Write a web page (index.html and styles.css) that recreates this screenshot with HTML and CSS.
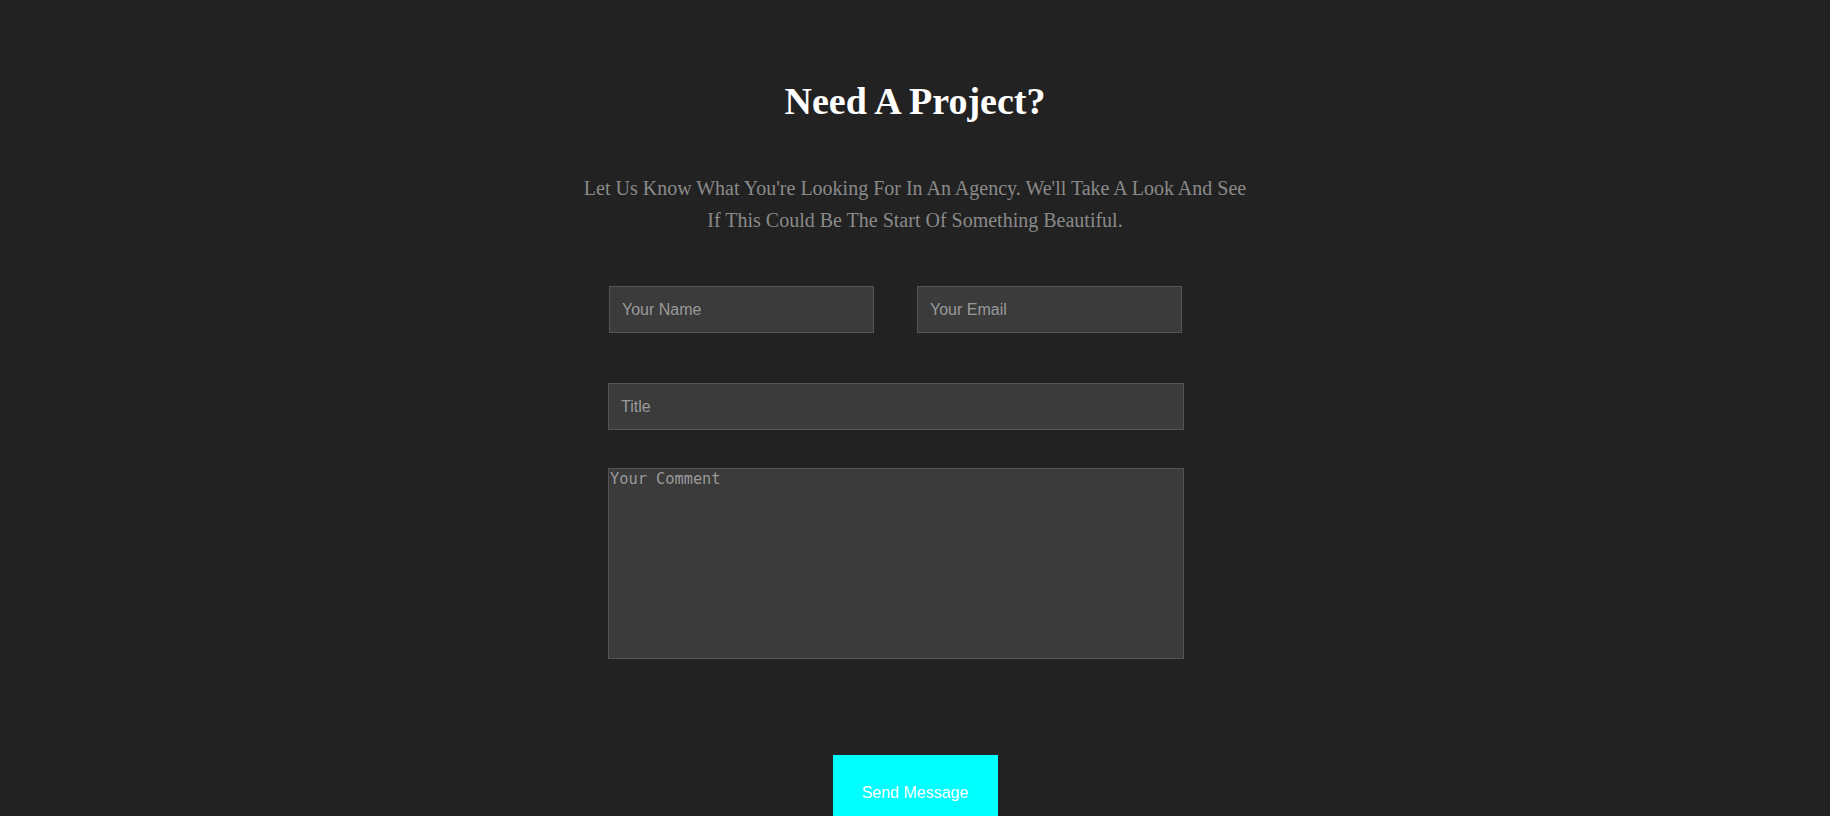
FILE: index.html
```html
<!DOCTYPE html>
<html lang="en">
<head>
<meta charset="utf-8">
<title>Need A Project?</title>
<link rel="stylesheet" href="styles.css">
</head>
<body>
<section class="contact">
  <h2 class="contact-title">Need A Project?</h2>
  <p class="contact-lead">Let Us Know What You're Looking For In An Agency. We'll Take A Look And See If This Could Be The Start Of Something Beautiful.</p>
  <div class="form-wrap">
    <form class="contact-form">
      <div class="row">
        <input class="field field-half" type="text" placeholder="Your Name">
        <input class="field field-half" type="email" placeholder="Your Email">
      </div>
      <input class="field field-full" type="text" placeholder="Title">
      <textarea class="comment" placeholder="Your Comment"></textarea>
    </form>
  </div>
  <div class="actions">
    <button class="send" type="button">Send Message</button>
  </div>
</section>
</body>
</html>
```

FILE: styles.css
```css
html, body {
  margin: 0;
  padding: 0;
  background: #222222;
}

body {
  font-family: "Liberation Serif", "Times New Roman", serif;
  overflow: hidden;
}

.contact {
  padding-top: 79px;
  text-align: center;
}

.contact-title {
  margin: 0;
  font-size: 38px;
  font-weight: bold;
  color: #ffffff;
  line-height: 44px;
}

.contact-lead {
  margin: 49px auto 0;
  max-width: 672px;
  font-size: 20px;
  line-height: 32px;
  color: #8a8a8a;
}

.form-wrap {
  display: flex;
  justify-content: center;
  margin-top: 50px;
}

.contact-form {
  width: 576px;
  margin-right: 38px;
  display: flex;
  flex-direction: column;
  text-align: left;
}

.row {
  display: flex;
  justify-content: space-between;
  padding: 0 2px 0 1px;
}

.field {
  box-sizing: border-box;
  height: 47px;
  padding: 0 12px;
  background: #3b3b3b;
  border: 1px solid #555555;
  color: #dddddd;
  font-family: "Liberation Sans", Arial, sans-serif;
  font-size: 16px;
  outline: none;
}

.field::placeholder,
.comment::placeholder {
  color: #9a9a9a;
  opacity: 1;
}

.field-half {
  width: 265px;
}

.field-full {
  width: 576px;
  margin-top: 50px;
}

.comment {
  box-sizing: border-box;
  width: 576px;
  height: 191px;
  margin-top: 38px;
  padding: 1px 1px;
  background: #3b3b3b;
  border: 1px solid #555555;
  color: #dddddd;
  font-family: "DejaVu Sans Mono", "Liberation Mono", monospace;
  font-size: 15.3px;
  resize: none;
  outline: none;
}

.actions {
  display: flex;
  justify-content: center;
  margin-top: 96px;
}

.send {
  width: 165px;
  height: 90px;
  padding: 0 0 14px;
  border: none;
  background: #00ffff;
  color: #ffffff;
  font-family: "Liberation Sans", Arial, sans-serif;
  font-size: 16px;
  cursor: pointer;
}
```
